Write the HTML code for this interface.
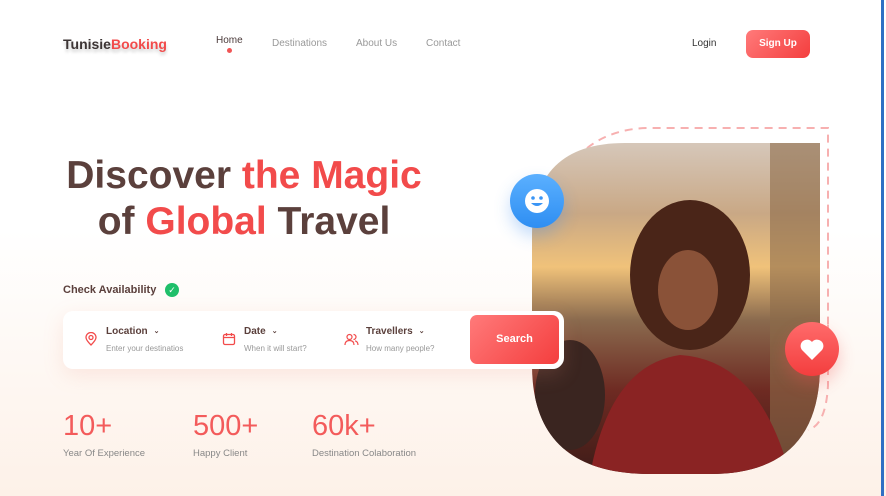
<!DOCTYPE html>
<html><head><meta charset="utf-8"><style>
*{margin:0;padding:0;box-sizing:border-box}
body{width:886px;height:496px;overflow:hidden;font-family:"Liberation Sans",sans-serif;background:linear-gradient(#fff 0,#fff 230px,#fdf1e8 496px);position:relative}
.a{position:absolute}
.logo{left:63px;top:36px;font-size:14px;font-weight:bold;color:#3d3535;text-shadow:0 3px 3px rgba(0,0,0,.2)}
.logo span{color:#f24b4b}
.nav{top:38px;font-size:10px;color:#999}
.btn{background:linear-gradient(135deg,#ff7a7a,#f43e3e);color:#fff;border-radius:7px;font-size:10px;font-weight:bold;text-align:center}
h1{position:absolute;left:0;width:488px;text-align:center;top:153px;font-size:39px;line-height:46px;color:#5b403c;font-weight:bold}
h1 span{color:#f24b4b}
.card{left:63px;top:311px;width:500px;height:58px;background:#fff;border-radius:10px;box-shadow:0 6px 20px rgba(240,150,130,.18)}
.lbl{font-size:10px;font-weight:bold;color:#5b403c}
.lbl i{font-style:normal;font-size:7px;margin-left:6px;vertical-align:1px}
.sub{font-size:8px;color:#999}
.num{font-size:29px;color:#f35b5b;top:410px}
.cap{font-size:9.5px;color:#888;top:448px}
</style></head><body>
<div class="a logo">Tunisie<span>Booking</span></div>
<div class="a nav" style="left:216px;top:35px;color:#4a3a3a">Home</div>
<div class="a" style="left:227px;top:48px;width:5px;height:5px;border-radius:50%;background:#f05555"></div>
<div class="a nav" style="left:272px">Destinations</div>
<div class="a nav" style="left:356px">About Us</div>
<div class="a nav" style="left:426px">Contact</div>
<div class="a nav" style="left:692px;color:#333">Login</div>
<div class="a btn" style="left:746px;top:30px;width:64px;height:28px;line-height:28px">Sign Up</div>

<h1>Discover <span>the Magic</span><br>of <span>Global</span> Travel</h1>
<div class="a" style="left:63px;top:284px;font-size:11px;font-weight:bold;color:#5b403c">Check Availability</div>
<div class="a" style="left:165px;top:283px;width:14px;height:14px;border-radius:50%;background:#1fbf6a;color:#fff;font-size:9px;text-align:center;line-height:14px">✓</div>

<svg class="a" style="left:530px;top:125px" width="302" height="355">
<defs><linearGradient id="g" x1="0" y1="0" x2="0" y2="1"><stop offset="0" stop-color="#d9cfc7"/><stop offset=".25" stop-color="#c9a885"/><stop offset=".4" stop-color="#f0c27a"/><stop offset=".55" stop-color="#8a6a4e"/><stop offset=".75" stop-color="#6e2a22"/><stop offset="1" stop-color="#3a1b17"/></linearGradient>
<clipPath id="c"><path d="M95 18 H290 V240 Q290 349 180 349 H120 Q2 349 2 240 V110 Q2 18 95 18Z"/></clipPath></defs>
<path d="M30 55 Q60 3 120 3 H298 V200 M298 200 V260 Q296 300 278 305" fill="none" stroke="#f7b0b0" stroke-width="2" stroke-dasharray="8 6"/>
<g clip-path="url(#c)"><rect width="302" height="355" fill="url(#g)"/>
<rect x="240" y="18" width="50" height="330" fill="#8c6a4a" opacity=".6"/>
<ellipse cx="160" cy="150" rx="60" ry="75" fill="#4a2518"/>
<ellipse cx="158" cy="165" rx="30" ry="40" fill="#8a5238"/>
<path d="M60 350 Q80 240 150 230 Q230 235 260 350Z" fill="#8a2323"/>
<ellipse cx="40" cy="270" rx="35" ry="55" fill="#3a2520"/>
</g></svg>
<div class="a" style="left:510px;top:174px;width:54px;height:54px;border-radius:50%;background:linear-gradient(#5bb0ff,#2e8ef2);box-shadow:0 8px 16px rgba(60,140,240,.3)">
<svg width="54" height="54"><circle cx="27" cy="27" r="12" fill="#fff"/><circle cx="23" cy="24" r="1.8" fill="#3a95f5"/><circle cx="31" cy="24" r="1.8" fill="#3a95f5"/><path d="M21 29 Q27 35 33 29Z" fill="#3a95f5"/></svg></div>
<div class="a" style="left:785px;top:322px;width:54px;height:54px;border-radius:50%;background:linear-gradient(#ff6b6b,#f33e3e);box-shadow:0 8px 16px rgba(240,80,80,.3)">
<svg width="54" height="54"><path d="M27 38 L17 28 A5.5 5.5 0 0 1 27 20 A5.5 5.5 0 0 1 37 28Z" fill="#fff"/></svg></div>

<div class="a card"></div>
<svg class="a" style="left:84px;top:332px" width="14" height="14"><path d="M7 13 Q2 8 2 5.5 A5 5 0 0 1 12 5.5 Q12 8 7 13Z" fill="none" stroke="#f24b4b" stroke-width="1.3"/><circle cx="7" cy="5.5" r="2" fill="none" stroke="#f24b4b" stroke-width="1.3"/></svg>
<div class="a lbl" style="left:106px;top:326px">Location<i>⌄</i></div>
<div class="a sub" style="left:106px;top:344px">Enter your destinatios</div>
<svg class="a" style="left:222px;top:332px" width="14" height="14"><rect x="1.5" y="2.5" width="11" height="10" rx="1.5" fill="none" stroke="#f24b4b" stroke-width="1.3"/><path d="M1.5 5.5H12.5M4.5 1V4M9.5 1V4" stroke="#f24b4b" stroke-width="1.3"/></svg>
<div class="a lbl" style="left:244px;top:326px">Date<i>⌄</i></div>
<div class="a sub" style="left:244px;top:344px">When it will start?</div>
<svg class="a" style="left:344px;top:333px" width="15" height="13"><circle cx="5.5" cy="4" r="2.5" fill="none" stroke="#f24b4b" stroke-width="1.2"/><path d="M1 12 Q1 7.5 5.5 7.5 Q10 7.5 10 12M9.5 1.5 A2.5 2.5 0 0 1 9.5 6.5M11 7.8 Q14 8.5 14 12" fill="none" stroke="#f24b4b" stroke-width="1.2"/></svg>
<div class="a lbl" style="left:366px;top:326px">Travellers<i>⌄</i></div>
<div class="a sub" style="left:366px;top:344px">How many people?</div>
<div class="a" style="left:466px;top:311px;width:98px;height:57px;background:#fff;border-radius:10px"></div>
<div class="a btn" style="left:470px;top:315px;width:89px;height:49px;line-height:49px;font-size:11px">Search</div>

<div class="a num" style="left:63px">10+</div><div class="a cap" style="left:63px">Year Of Experience</div>
<div class="a num" style="left:193px">500+</div><div class="a cap" style="left:193px">Happy Client</div>
<div class="a num" style="left:312px">60k+</div><div class="a cap" style="left:312px">Destination Colaboration</div>
<div class="a" style="left:881px;top:0;width:3px;height:496px;background:#2f6fc4"></div>
</body></html>
